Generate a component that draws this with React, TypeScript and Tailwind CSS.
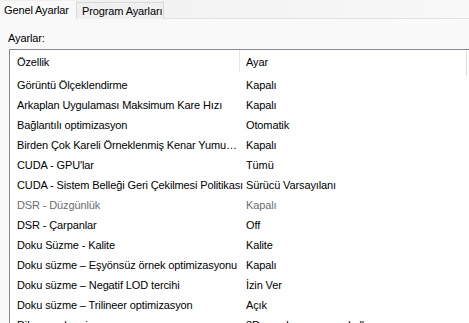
const rows: { name: string; value: string; dim?: boolean }[] = [
  { name: "Görüntü Ölçeklendirme", value: "Kapalı" },
  { name: "Arkaplan Uygulaması Maksimum Kare Hızı", value: "Kapalı" },
  { name: "Bağlantılı optimizasyon", value: "Otomatik" },
  { name: "Birden Çok Kareli Örneklenmiş Kenar Yumu…", value: "Kapalı" },
  { name: "CUDA - GPU'lar", value: "Tümü" },
  { name: "CUDA - Sistem Belleği Geri Çekilmesi Politikası", value: "Sürücü Varsayılanı" },
  { name: "DSR - Düzgünlük", value: "Kapalı", dim: true },
  { name: "DSR - Çarpanlar", value: "Off" },
  { name: "Doku Süzme - Kalite", value: "Kalite" },
  { name: "Doku süzme – Eşyönsüz örnek optimizasyonu", value: "Kapalı" },
  { name: "Doku süzme – Negatif LOD tercihi", value: "İzin Ver" },
  { name: "Doku süzme – Trilineer optimizasyon", value: "Açık" },
  { name: "Dikey senkronizasyon", value: "3D uygulama ayarını kullan" },
];

export default function App() {
  return (
    <div className="flex h-[323px] w-[469px] flex-col overflow-hidden whitespace-nowrap bg-[#f9f9f9] font-['Liberation_Sans',Arial,sans-serif] text-[11px] tracking-[-0.12px] text-black">
      {/* tabs */}
      <div className="flex h-[19px] shrink-0 items-end bg-gradient-to-r from-[#efefef] to-[#f8f8f8]">
        <div className="-mb-px flex h-[19px] w-[76px] items-center bg-[#f9f9f9] pl-[4px]">Genel Ayarlar</div>
        <div className="flex h-[17px] w-[88px] items-center border-x border-t border-[#d9d9d9] bg-[#f0f0f0] pl-[5px]">
          Program Ayarları
        </div>
        <div className="h-px flex-1 bg-[#e3e3e3]" />
      </div>

      <div className="flex h-[30px] shrink-0 items-center pl-[8px] pt-[8px]">Ayarlar:</div>

      {/* list */}
      <div className="relative ml-[9px] flex-1 border-l border-t border-[#828790] bg-white">
        <div className="flex h-[25px] items-center">
          <div className="flex h-full w-[229px] items-center pl-[7px]">Özellik</div>
          <div className="h-[22px] w-px self-start bg-[#e5e5e5]" />
          <div className="pl-[6px]">Ayar</div>
        </div>
        {rows.map((r) => (
          <div key={r.name} className={`flex h-[20px] items-center ${r.dim ? "text-[#6d6d6d]" : ""}`}>
            <div className="w-[230px] shrink-0 pl-[7px]">{r.name}</div>
            <div className="pl-[6px]">{r.value}</div>
          </div>
        ))}
        <div className="absolute right-[2px] top-[1px] h-[25px] w-px bg-[#dcdcdc]" />
      </div>
    </div>
  );
}
